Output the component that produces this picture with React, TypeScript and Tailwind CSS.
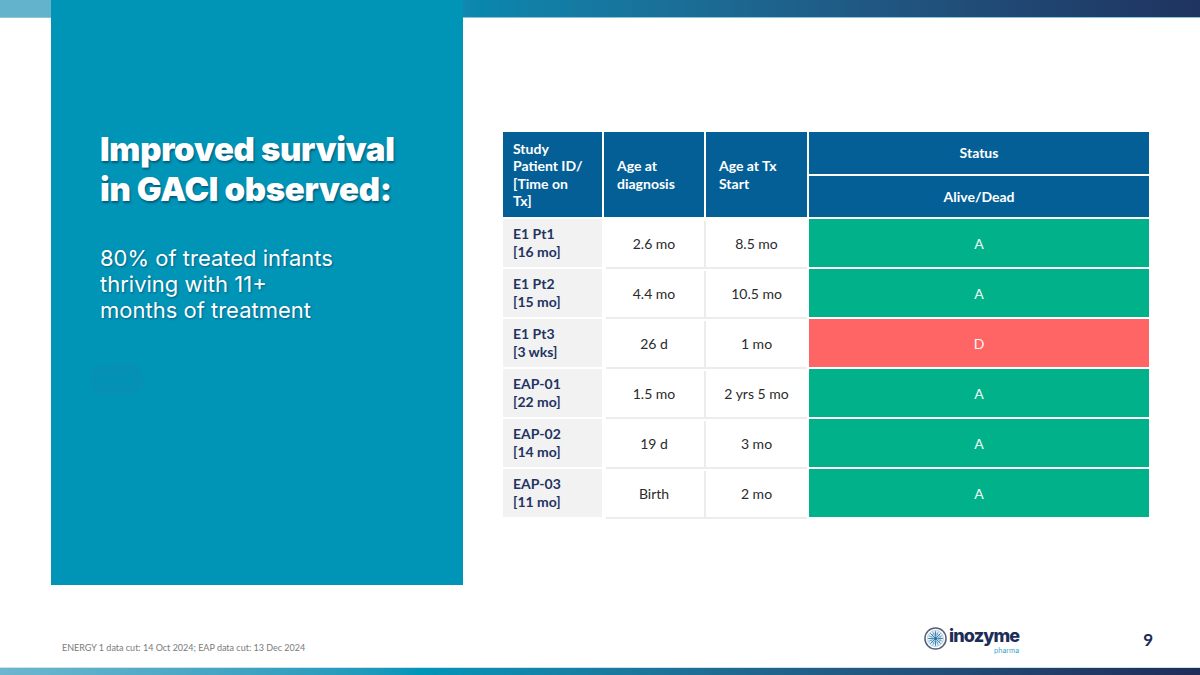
import React from "react";

type Row = { id: string; time: string; dx: string; tx: string; status: "A" | "D" };

const rows: Row[] = [
  { id: "E1 Pt1", time: "[16 mo]", dx: "2.6 mo", tx: "8.5 mo", status: "A" },
  { id: "E1 Pt2", time: "[15 mo]", dx: "4.4 mo", tx: "10.5 mo", status: "A" },
  { id: "E1 Pt3", time: "[3 wks]", dx: "26 d", tx: "1 mo", status: "D" },
  { id: "EAP-01", time: "[22 mo]", dx: "1.5 mo", tx: "2 yrs 5 mo", status: "A" },
  { id: "EAP-02", time: "[14 mo]", dx: "19 d", tx: "3 mo", status: "A" },
  { id: "EAP-03", time: "[11 mo]", dx: "Birth", tx: "2 mo", status: "A" },
];

function LogoMark() {
  const spokes = Array.from({ length: 16 }, (_, i) => (i * Math.PI * 2) / 16);
  return (
    <svg width="23" height="23" viewBox="0 0 24 24">
      <circle cx="12" cy="12" r="11" fill="#ffffff" stroke="#56627a" strokeWidth="1.6" />
      <circle cx="12" cy="12" r="8.4" fill="#e6f1f7" stroke="#9fb3c6" strokeWidth="0.6" />
      {spokes.map((a, i) => (
        <line
          key={i}
          x1={12 + Math.cos(a) * 2}
          y1={12 + Math.sin(a) * 2}
          x2={12 + Math.cos(a) * 7.6}
          y2={12 + Math.sin(a) * 7.6}
          stroke={i % 2 ? "#5aa6cf" : "#2e6f9e"}
          strokeWidth="0.9"
        />
      ))}
      <circle cx="12" cy="12" r="5" fill="none" stroke="#3d86b8" strokeWidth="0.8" strokeDasharray="1.4 1" />
      <circle cx="12" cy="12" r="1.8" fill="#2e6f9e" />
    </svg>
  );
}

export default function App() {
  return (
    <div className="w-[1200px] h-[675px] bg-white flex flex-col overflow-hidden font-['Liberation_Sans',sans-serif]">
      {/* top band */}
      <div className="h-[18px] shrink-0 bg-linear-to-r from-[#63b3cc] from-[4%] via-[#0a86ad] via-[40%] to-[#1f3360] border-b border-[#8cc3d6]" />

      {/* main */}
      <div className="flex">
        <div className="relative z-10 ml-[51px] -mt-[18px] w-[412px] h-[585px] bg-[#0094b7] pl-[49px] pt-[129px] text-white">
          <h1 className="font-['Inter',sans-serif] font-black text-[33px] leading-[40px] tracking-[-0.3px] [text-shadow:1px_2px_2px_rgba(0,40,70,0.5)]">
            Improved survival
            <br />
            in GACI observed:
          </h1>
          <p className="mt-[36px] font-['Inter',sans-serif] text-[22px] leading-[26px] [text-shadow:1px_1px_2px_rgba(0,40,70,0.45)]">
            80% of treated infants
            <br />
            thriving with 11+
            <br />
            months of treatment
          </p>
          <div className="absolute left-[40px] top-[365px] w-[52px] h-[28px] rounded-full bg-[#0392b5] border-[5px] border-[#0790b3]" />
        </div>

        <div className="ml-[40px] mt-[114px] w-[646px] font-['Lato',sans-serif] text-[14px]">
          {/* header */}
          <div className="grid grid-cols-[99px_100px_101px_340px] gap-x-[2px] h-[85px] text-white font-bold leading-[17.5px]">
            <div className="bg-[#045f97] flex items-center pl-[10px]">
              <span>
                Study
                <br />
                Patient ID/
                <br />
                [Time on
                <br />
                Tx]
              </span>
            </div>
            <div className="bg-[#045f97] flex items-center pl-[13px]">
              <span>
                Age at
                <br />
                diagnosis
              </span>
            </div>
            <div className="bg-[#045f97] flex items-center pl-[13px]">
              <span>
                Age at Tx
                <br />
                Start
              </span>
            </div>
            <div className="flex flex-col gap-y-[2px]">
              <div className="bg-[#045f97] flex-1 flex items-center justify-center">Status</div>
              <div className="bg-[#045f97] flex-1 flex items-center justify-center">Alive/Dead</div>
            </div>
          </div>

          {/* body */}
          <div className="mt-[2px] flex flex-col gap-y-[2px]">
            {rows.map((r) => (
              <div key={r.id} className="grid grid-cols-[99px_100px_101px_340px] gap-x-[2px] h-[48px]">
                <div className="bg-[#f2f2f2] flex items-center pl-[10px] font-bold text-[#1f3462] leading-[18px]">
                  <span>
                    {r.id}
                    <br />
                    {r.time}
                  </span>
                </div>
                <div className="flex items-center justify-center text-[#2b2b2b] shadow-[2px_2px_0_#ececec]">{r.dx}</div>
                <div className="flex items-center justify-center text-[#2b2b2b] shadow-[0_2px_0_#ececec]">{r.tx}</div>
                <div
                  className={`flex items-center justify-center text-[#f2faf7] ${
                    r.status === "A" ? "bg-[#00b189]" : "bg-[#ff6565]"
                  }`}
                >
                  {r.status}
                </div>
              </div>
            ))}
          </div>
        </div>
      </div>

      {/* footer */}
      <div className="flex-1 flex items-center pl-[62px] pr-[47px] pt-[30px]">
        <p className="mt-[14px] font-['Lato',sans-serif] text-[9px] text-[#7a7a7a]">
          ENERGY 1 data cut: 14 Oct 2024; EAP data cut: 13 Dec 2024
        </p>
        <div className="ml-auto flex items-start gap-[2px]">
          <LogoMark />
          <div className="flex flex-col items-end">
            <span className="font-['Inter',sans-serif] font-extrabold text-[18px] tracking-[-0.9px] text-[#1c2d57] leading-[18px]">
              inozyme
            </span>
            <span className="mt-[2px] font-['Inter',sans-serif] text-[7px] leading-[8px] text-[#3aa6c8]">pharma</span>
          </div>
        </div>
        <span className="ml-[124px] -mt-[2px] font-['Lato',sans-serif] font-bold text-[17px] text-[#1c2d57]">9</span>
      </div>

      {/* bottom band */}
      <div className="h-[8px] shrink-0 bg-linear-to-r from-[#6cb6ce] via-[#0095b8] via-[35%] to-[#1f2c58] border-t border-[#c9e4ed]" />
    </div>
  );
}
